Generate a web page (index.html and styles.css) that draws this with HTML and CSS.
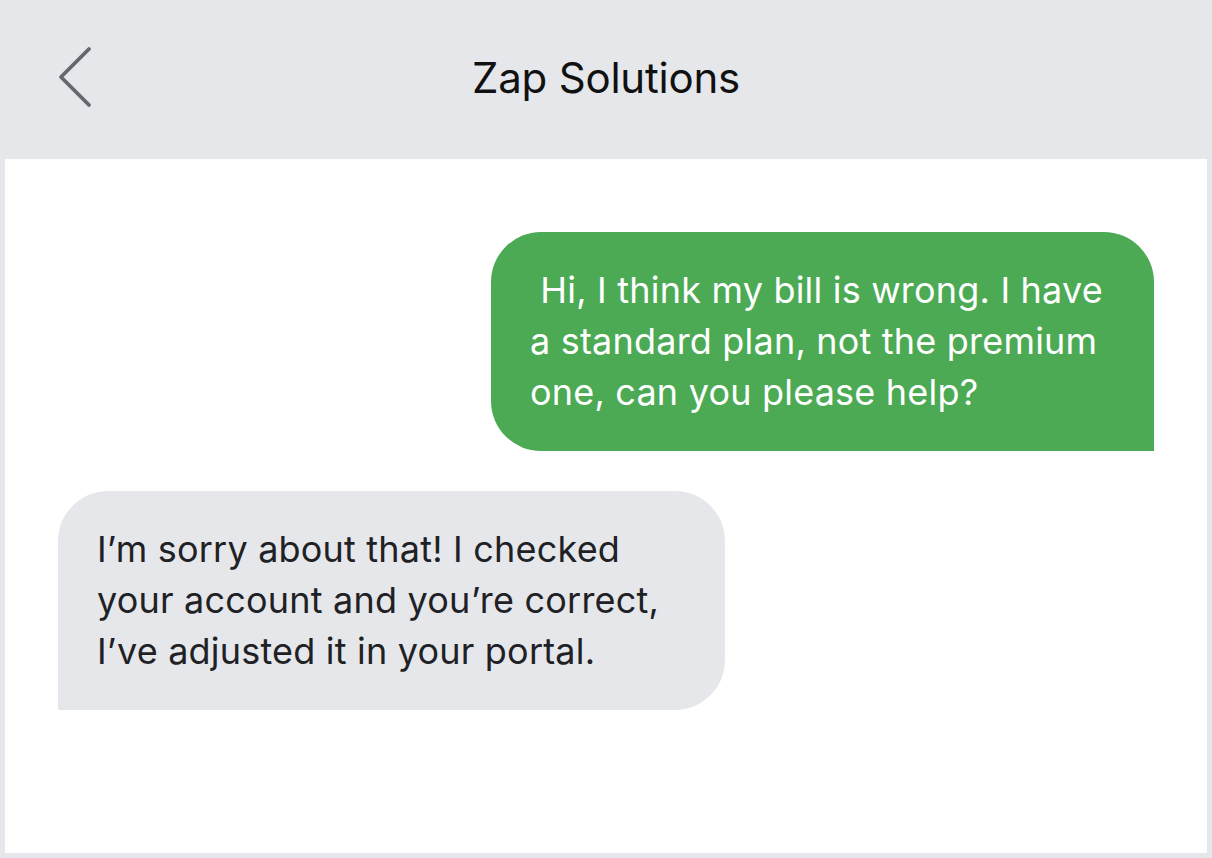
FILE: index.html
```html
<!DOCTYPE html>
<html lang="en">
<head>
<meta charset="utf-8">
<title>Zap Solutions</title>
<link rel="stylesheet" href="styles.css">
</head>
<body>
<div class="app">
  <header class="header">
    <button class="back" aria-label="Back">
      <svg width="40" height="64" viewBox="0 0 40 64" fill="none">
        <polyline points="33,4 5,32 33,60" stroke="#64676c" stroke-width="3.8" stroke-linecap="round" stroke-linejoin="round"/>
      </svg>
    </button>
    <h1 class="title">Zap Solutions</h1>
  </header>
  <main class="chat">
    <div class="bubble sent">&nbsp;Hi, I think my bill is wrong. I have<br>a standard plan, not the premium<br>one, can you please help?</div>
    <div class="bubble received">I’m sorry about that! I checked<br>your account and you’re correct,<br>I’ve adjusted it in your portal.</div>
  </main>
</div>
</body>
</html>
```
FILE: styles.css
```css
* { box-sizing: border-box; }
html, body { margin: 0; padding: 0; }
body {
  background: #e5e7eb;
  font-family: Inter, "Noto Sans", sans-serif;
  width: 1212px;
  height: 858px;
  overflow: hidden;
}
.app {
  display: flex;
  flex-direction: column;
  height: 858px;
  padding: 0 5px 5px 5px;
}
.header {
  position: relative;
  height: 159px;
  display: flex;
  align-items: center;
  justify-content: center;
}
.back {
  position: absolute;
  left: 51px;
  top: 45px;
  width: 40px;
  height: 64px;
  padding: 0;
  border: 0;
  background: none;
  display: flex;
}
.title {
  margin: 0;
  font-weight: 400;
  font-size: 42px;
  color: #111;
  letter-spacing: -0.2px;
  transform: translateY(-2px);
}
.chat {
  flex: 1;
  background: #fff;
  padding: 73px 48px 0 53px;
  display: flex;
  flex-direction: column;
  gap: 40px;
}
.bubble {
  font-size: 36px;
  line-height: 51px;
  letter-spacing: 0.2px;
  padding: 33px 40px 33px 39px;
  border-radius: 50px;
  white-space: nowrap;
}
.sent {
  align-self: flex-end;
  width: 663px;
  margin-right: 5px;
  background: #4caa55;
  color: #fff;
  border-bottom-right-radius: 0;
}
.received {
  align-self: flex-start;
  width: 667px;
  background: #e5e7eb;
  color: #1f2124;
  border-bottom-left-radius: 0;
}
```
